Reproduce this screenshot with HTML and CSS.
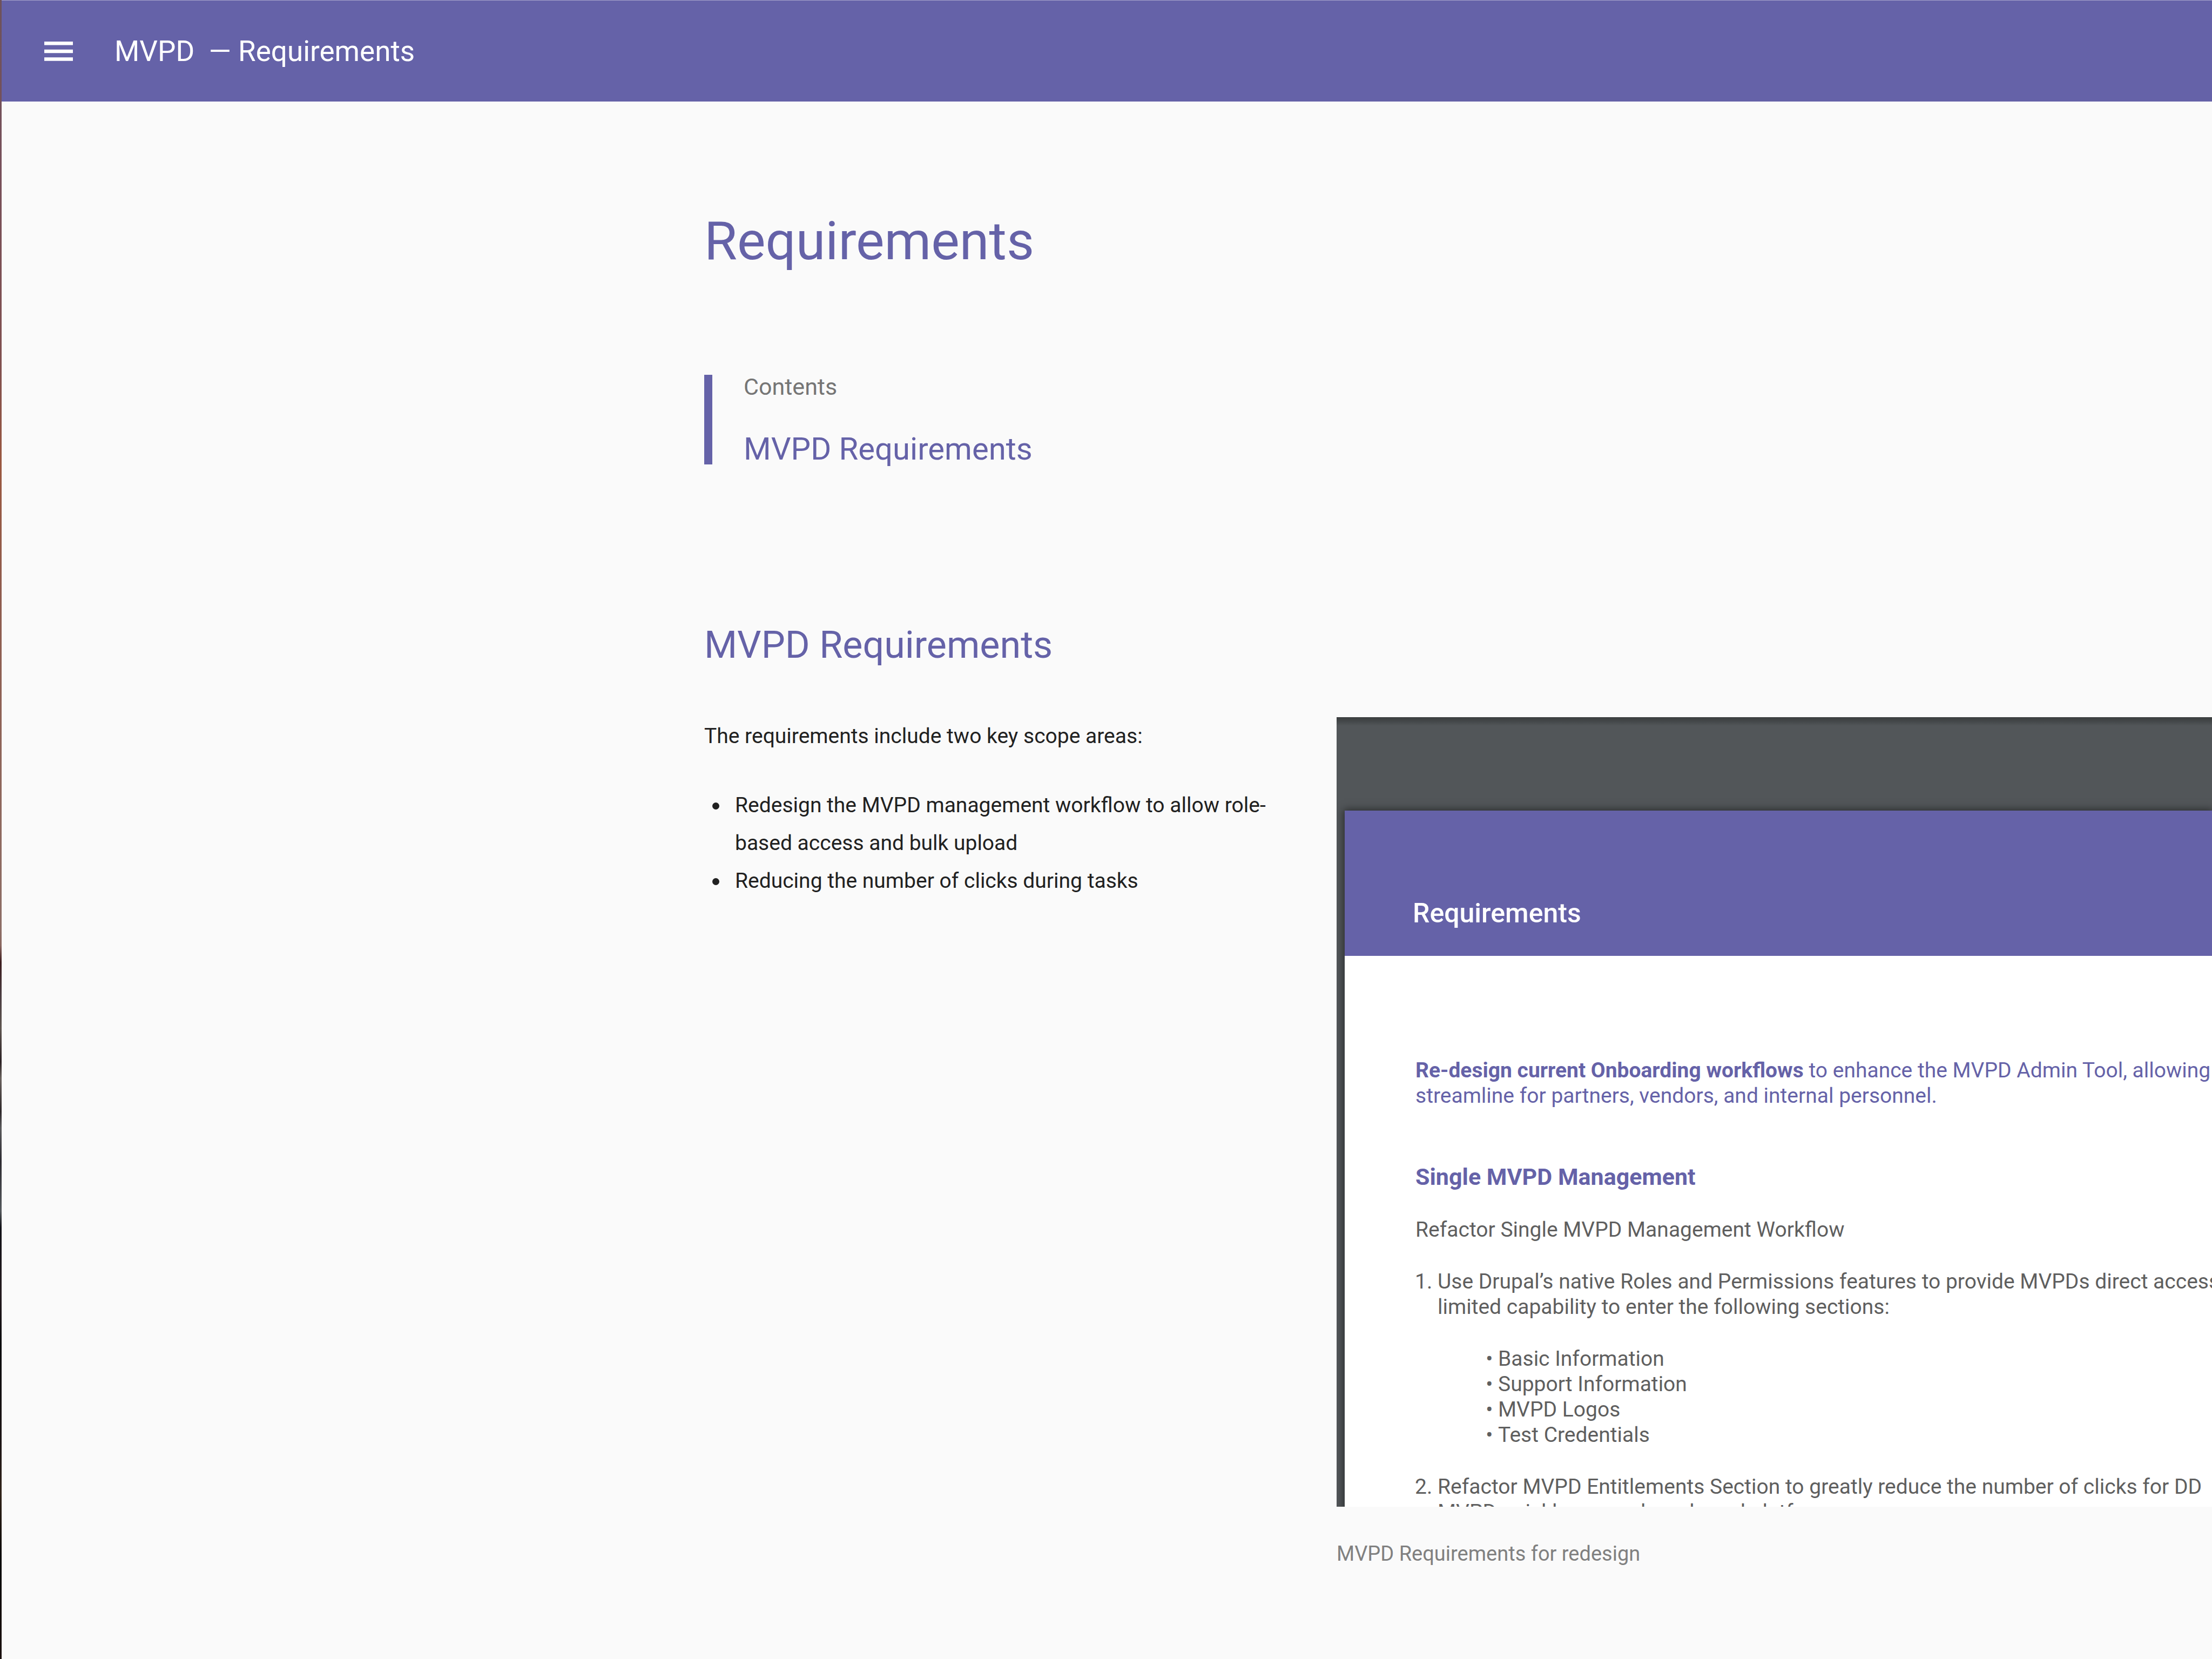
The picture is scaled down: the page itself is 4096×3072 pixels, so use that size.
FILE: index.html
```
<!DOCTYPE html>
<html lang="en">
<head>
<meta charset="utf-8">
<meta name="viewport" content="width=device-width, initial-scale=1">
<title>MVPD — Requirements</title>
<link rel="stylesheet" href="styles.css">
</head>
<body>
<div class="edge"></div>
<div class="page">
  <header class="app-bar">
    <button class="menu-button" type="button" aria-label="Open menu">
      <svg class="menu-icon" viewBox="0 0 53 36" aria-hidden="true">
        <path d="M0 0h53v6.500H0zM0 14.700h53v6.500H0zM0 29.300h53v6.500H0z"/>
      </svg>
    </button>
    <span class="app-title">MVPD &nbsp;— Requirements</span>
  </header>
  <main class="content">
    <h1 class="page-title">Requirements</h1>
    <nav class="toc" aria-labelledby="toc-label">
      <span class="toc-label" id="toc-label">Contents</span>
      <a class="toc-link" href="#mvpd-requirements">MVPD Requirements</a>
    </nav>
    <section class="section">
      <h2 class="section-title" id="mvpd-requirements">MVPD Requirements</h2>
      <div class="columns">
        <div class="copy">
          <p class="copy-text">The requirements include two key scope areas:</p>
          <ul class="copy-list">
            <li>Redesign the MVPD management workflow to allow role-based access and bulk upload</li>
            <li>Reducing the number of clicks during tasks</li>
          </ul>
        </div>
        <figure class="figure">
          <div class="viewer">
            <article class="doc">
              <header class="doc-header">
                <h3 class="doc-title">Requirements</h3>
              </header>
              <div class="doc-body">
                <p class="doc-lead"><strong>Re-design current Onboarding workflows</strong> to enhance the MVPD Admin Tool, allowing<br>streamline for partners, vendors, and internal personnel.</p>
                <h4 class="doc-heading">Single MVPD Management</h4>
                <p class="doc-text">Refactor Single MVPD Management Workflow</p>
                <ol class="doc-steps">
                  <li>Use Drupal’s native Roles and Permissions features to provide MVPDs direct access<br>limited capability to enter the following sections:
                    <ul class="doc-sections">
                      <li>Basic Information</li>
                      <li>Support Information</li>
                      <li>MVPD Logos</li>
                      <li>Test Credentials</li>
                    </ul>
                  </li>
                  <li>Refactor MVPD Entitlements Section to greatly reduce the number of clicks for DD<br>MVPD quickly across brands and platforms.</li>
                </ol>
              </div>
            </article>
          </div>
          <figcaption class="caption">MVPD Requirements for redesign</figcaption>
        </figure>
      </div>
    </section>
  </main>
</div>
</body>
</html>
```
FILE: styles.css
```
:root {
  --purple: #6562a8;
  --paper: #fafafa;
}

* {
  box-sizing: border-box;
  margin: 0;
  padding: 0;
}

body {
  display: flex;
  min-height: 100vh;
  background: var(--paper);
  color: #212121;
  font-family: Roboto, "Liberation Sans", sans-serif;
  font-size: 39px;
  line-height: 70px;
}

/* Sliver of the desktop beside the window */
.edge {
  flex: 0 0 3px;
  background: linear-gradient(
    #6e525a 0%, #77505a 10%, #80504f 22%, #9a5840 28%, #8f5c4e 36%,
    #8d6e66 56%, #8a6760 57%, #3c1c1e 58%, #4a3c40 60%, #5e5550 62%,
    #2a2022 64%, #6a625e 65%, #2c2628 67%, #5a5a5c 68%, #2c2a30 70%,
    #54585c 73%, #101016 74%, #241a1e 78%, #0a0a0c 81%, #1c1414 87%,
    #302218 90%, #080605 94%, #1a100e 100%);
}

.page {
  flex: 1;
  min-width: 0;
}

.app-bar {
  display: flex;
  align-items: center;
  gap: 77px;
  height: 188px;
  padding-left: 79px;
  border-top: 1px solid #a5a3cc;
  background: var(--purple);
  color: #fff;
}

.menu-button {
  display: flex;
  border: 0;
  background: none;
  color: inherit;
}

.menu-icon {
  width: 53px;
  height: 36px;
  fill: currentColor;
}

.app-title {
  font-size: 53px;
  line-height: 60px;
}

.content {
  padding: 198px 0 100px 1301px;
}

.page-title {
  margin-bottom: 188px;
  color: var(--purple);
  font-size: 99px;
  font-weight: 400;
  line-height: 120px;
}

.toc {
  display: flex;
  flex-direction: column;
  align-items: flex-start;
  gap: 64px;
  margin-bottom: 292px;
  padding-left: 58px;
  border-left: 15px solid var(--purple);
}

.toc-label {
  color: #757575;
  font-size: 43px;
  line-height: 44px;
}

.toc-link {
  color: var(--purple);
  font-size: 58px;
  line-height: 58px;
  text-decoration: none;
}

.section-title {
  margin-bottom: 92px;
  color: var(--purple);
  font-size: 70px;
  font-weight: 400;
  line-height: 84px;
}

.columns {
  display: grid;
  grid-template-columns: 1064px minmax(0, 1fr);
  gap: 107px;
}

.copy-text {
  margin-bottom: 58px;
}

.copy-list {
  padding-left: 15px;
  list-style: none;
}

.copy-list li {
  display: grid;
  grid-template-columns: 13px 1fr;
  gap: 29px;
}

.copy-list li::before {
  content: "";
  height: 13px;
  margin-top: 30px;
  border-radius: 50%;
  background: currentColor;
}

.viewer {
  height: 1462px;
  padding: 173px 0 0 15px;
  overflow: hidden;
  background: linear-gradient(#3a3d3e 0, #44484a 8px, #525659 16px);
}

.doc {
  background: #fff;
  box-shadow: 0 0 14px 2px rgba(0, 0, 0, 0.5);
  white-space: nowrap;
}

.doc-header {
  display: flex;
  align-items: flex-end;
  height: 269px;
  padding: 0 0 49px 126px;
  background: var(--purple);
}

.doc-title {
  color: #fff;
  font-size: 50px;
  font-weight: 500;
  line-height: 60px;
}

.doc-body {
  padding: 189px 0 189px 131px;
  color: #5f5f5f;
  font-size: 39px;
  line-height: 47px;
}

.doc-lead {
  margin-bottom: 100px;
  color: var(--purple);
}

.doc-heading {
  margin-bottom: 49px;
  color: var(--purple);
  font-size: 43px;
  line-height: 52px;
}

.doc-text {
  margin-bottom: 49px;
}

.doc-steps {
  padding-left: 41px;
}

.doc-sections {
  margin: 49px 0;
  padding-left: 112px;
  list-style-type: "• ";
}

.caption {
  margin-top: 62px;
  color: #808080;
  font-size: 38px;
  line-height: 50px;
}
```
